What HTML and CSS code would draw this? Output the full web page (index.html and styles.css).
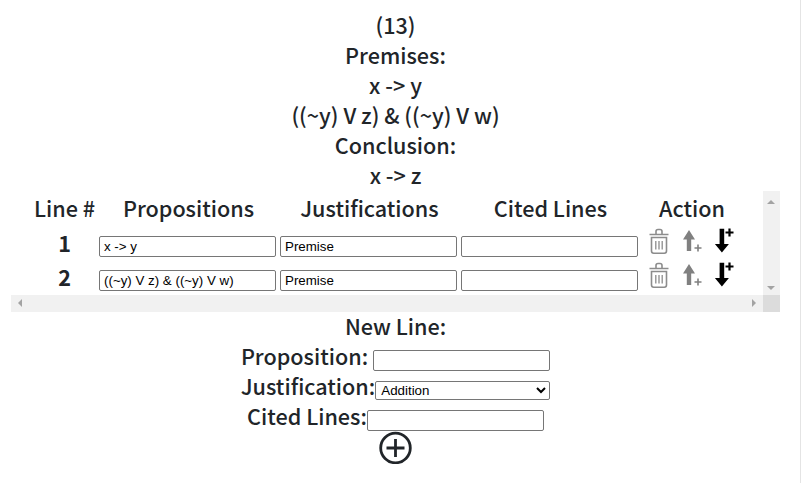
FILE: index.html
```html
<!DOCTYPE html>
<html lang="en">
<head>
    <meta charset="UTF-8">
    <title>Proof</title>
    <link rel="stylesheet" href="styles.css">
</head>
<body>

<svg class="icon-defs" width="0" height="0">
    <symbol id="icon-trash" viewBox="0 0 20 26">
        <path d="M.5 6.500h19M7 6V3.500C7 2 8 1.500 9 1.500h2c1 0 2 .5 2 2V6" fill="none" stroke="currentColor" stroke-width="1.600"/>
        <path d="M2.500 9.500h15V23c0 1.500-1 2.200-2.200 2.200H4.700C3.500 25.200 2.500 24.500 2.500 23z" fill="none" stroke="currentColor" stroke-width="1.600"/>
        <path d="M6.800 13v8.500M10 13v8.500M13.200 13v8.500" fill="none" stroke="currentColor" stroke-width="1.300"/>
    </symbol>
    <symbol id="icon-up-plus" viewBox="0 0 22 26">
        <path d="M7 1 L13 10.500 L9.200 10.500 L9.200 22 L4.800 22 L4.800 10.500 L1 10.500z" fill="currentColor"/>
        <path d="M12.500 19h7M16 15.500v7" fill="none" stroke="currentColor" stroke-width="1.600"/>
    </symbol>
    <symbol id="icon-down-plus" viewBox="0 0 22 26">
        <path d="M5.600 .7h4.600v15.300h4.700L7.900 24.500 .9 16h4.700z" fill="currentColor"/>
        <path d="M11.500 4.500h8M15.500 .5v8" fill="none" stroke="currentColor" stroke-width="2.200"/>
    </symbol>
</svg>

<div class="page">
    <div class="problem">
        <div>(13)</div>
        <div>Premises:</div>
        <div>x -&gt; y</div>
        <div>((~y) V z) &amp; ((~y) V w)</div>
        <div>Conclusion:</div>
        <div>x -&gt; z</div>
    </div>

    <div class="proof-frame">
        <div class="proof-scroll">
            <div class="proof-row proof-head">
                <div>Line #</div>
                <div class="head-cell">Propositions</div>
                <div class="head-cell">Justifications</div>
                <div class="head-cell">Cited Lines</div>
                <div class="head-cell">Action</div>
            </div>
            <div class="proof-row">
                <div class="line-no">1</div>
                <input class="field" type="text" value="x -> y">
                <input class="field" type="text" value="Premise">
                <input class="field" type="text">
                <div class="actions">
                    <svg class="ic-trash"><use href="#icon-trash"/></svg>
                    <svg class="ic-up"><use href="#icon-up-plus"/></svg>
                    <svg class="ic-down"><use href="#icon-down-plus"/></svg>
                </div>
            </div>
            <div class="proof-row">
                <div class="line-no">2</div>
                <input class="field" type="text" value="((~y) V z) &amp; ((~y) V w)">
                <input class="field" type="text" value="Premise">
                <input class="field" type="text">
                <div class="actions">
                    <svg class="ic-trash"><use href="#icon-trash"/></svg>
                    <svg class="ic-up"><use href="#icon-up-plus"/></svg>
                    <svg class="ic-down"><use href="#icon-down-plus"/></svg>
                </div>
            </div>
        </div>
        <div class="bar bar-v">
            <span class="arrow arrow-up"></span>
            <span class="arrow arrow-down"></span>
        </div>
        <div class="bar bar-h">
            <span class="arrow arrow-left"></span>
            <span class="arrow arrow-right"></span>
        </div>
        <div class="bar-corner"></div>
    </div>

    <div class="new-line">
        <div>New Line:</div>
        <div class="form-row">
            <label class="label-gap">Proposition:</label>
            <input class="field" type="text">
        </div>
        <div class="form-row">
            <label>Justification:</label>
            <select class="field-select">
                <option>Addition</option>
            </select>
        </div>
        <div class="form-row">
            <label>Cited Lines:</label>
            <input class="field" type="text">
        </div>
        <button class="add-button" type="button">
            <svg width="33" height="33" viewBox="0 0 33 33">
                <circle cx="16.500" cy="17" r="14.800" fill="none" stroke="currentColor" stroke-width="2.800"/>
                <path d="M16.500 8v18M7.500 17h18" fill="none" stroke="currentColor" stroke-width="2.800"/>
            </svg>
        </button>
    </div>
</div>

</body>
</html>
```

FILE: styles.css
```css
body {
    margin: 0;
    background-color: #fff;
    color: #212529;
    font-family: "Noto Sans CJK SC", "Noto Sans", sans-serif;
    font-size: 21.6px;
    font-weight: 500;
    line-height: 30px;
}
.icon-defs {
    position: absolute;
}
.page {
    width: 769px;
    padding: 10px 20px 0 11px;
    border-right: 1px solid #e4e4e4;
    min-height: 473px;
    text-align: center;
}
.problem {
    margin-bottom: 1px;
}
.proof-frame {
    display: grid;
    grid-template-columns: 752px 17px;
    grid-template-rows: 104px 17px;
}
.proof-scroll {
    overflow: hidden;
    padding-left: 23px;
}
.proof-row {
    display: grid;
    grid-template-columns: 61px 177px 177px 177px 98px;
    column-gap: 4px;
    height: 34px;
    line-height: 28px;
}
.proof-head {
    height: 38px;
    line-height: 34px;
    white-space: nowrap;
}
.head-cell {
    padding-left: 2px;
}
.proof-row .field {
    margin-top: 7px;
}
.line-no {
    font-weight: 700;
}
.field {
    box-sizing: border-box;
    width: 177px;
    height: 21px;
    padding: 1px 3px 1px 3px;
    border: 1px solid #767676;
    border-radius: 2px;
    background: #fff;
    color: #000;
    font-family: "Liberation Sans", Arial, sans-serif;
    font-size: 13.333px;
    text-indent: 1px;
}
.field-select {
    box-sizing: border-box;
    width: 175px;
    height: 19px;
    padding-left: 1px;
    border: 1px solid #767676;
    border-radius: 2px;
    background: #fff;
    color: #000;
    font-family: "Liberation Sans", Arial, sans-serif;
    font-size: 13.333px;
}
.actions {
    display: flex;
    align-items: flex-start;
    padding-left: 7px;
    margin-top: -1px;
}
.actions svg {
    flex: none;
    height: 26px;
}
.ic-trash {
    width: 20px;
    color: #8c8c8c;
}
.ic-up {
    width: 22px;
    margin-left: 13px;
    margin-top: 1px;
    color: #808080;
}
.ic-down {
    width: 22px;
    margin-left: 10px;
    color: #000;
}
.bar {
    position: relative;
    background: #f1f1f1;
}
.bar-corner {
    background: #dcdcdc;
}
.arrow {
    position: absolute;
    width: 0;
    height: 0;
    border: 4px solid transparent;
}
.arrow-up {
    top: 5px;
    left: 4px;
    border-bottom-color: #a3a3a3;
}
.arrow-down {
    bottom: 1px;
    left: 4px;
    border-top-color: #a3a3a3;
}
.arrow-left {
    top: 4px;
    left: 3px;
    border-right-color: #a3a3a3;
}
.arrow-right {
    top: 4px;
    right: 3px;
    border-left-color: #a3a3a3;
}
.new-line {
    margin-top: -1px;
}
.form-row {
    display: flex;
    justify-content: center;
    align-items: baseline;
    height: 30px;
}
.label-gap {
    margin-right: 5px;
}
.add-button {
    display: block;
    width: 33px;
    height: 33px;
    margin: 0 auto;
    padding: 0;
    border: none;
    background: none;
    color: #212529;
    cursor: pointer;
}
```
